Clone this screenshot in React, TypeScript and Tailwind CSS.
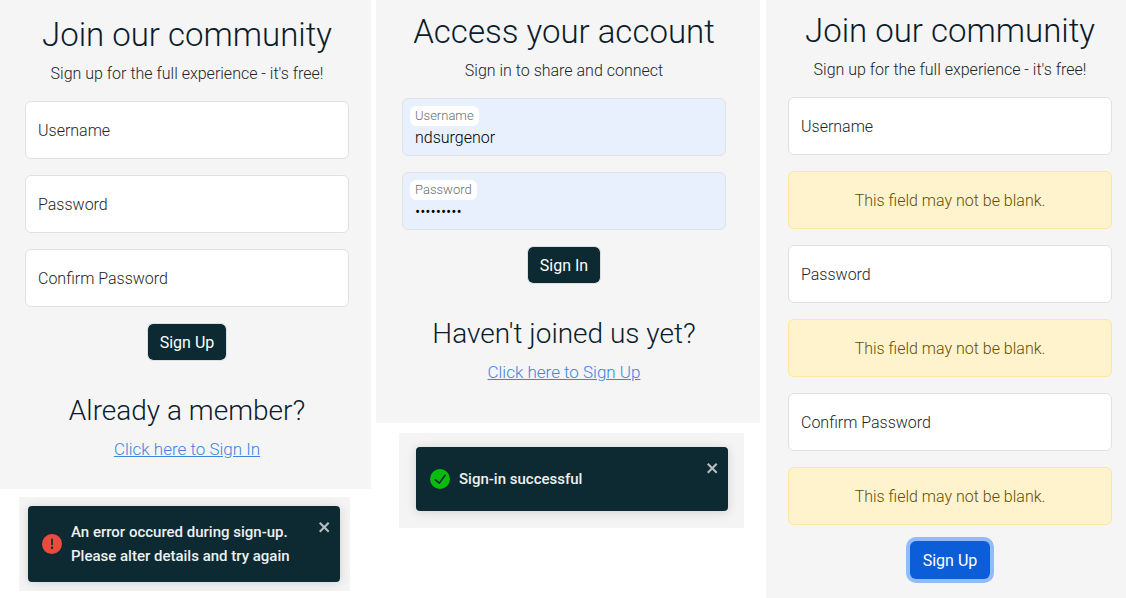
import { useId, type ReactNode } from "react";

function Field({ label, type = "text" }: { label: string; type?: string }) {
  const id = useId();
  return (
    <div className="relative">
      <input
        id={id}
        type={type}
        className="block h-[58px] w-full rounded-md border border-[#dee2e6] bg-white px-3 text-base font-light text-[#212529] outline-none"
      />
      <label
        htmlFor={id}
        className="pointer-events-none absolute inset-y-0 left-0 flex items-center px-[13px] pt-0.5 font-light text-[#212529]"
      >
        {label}
      </label>
    </div>
  );
}

function FilledField({ label, value, type = "text" }: { label: string; value: string; type?: string }) {
  const id = useId();
  return (
    <div className="relative">
      <input
        id={id}
        type={type}
        defaultValue={value}
        className="block h-[58px] w-full rounded-md border border-[#dee2e6] bg-[#e8f0fe] px-3 pt-5 text-base font-light text-black outline-none"
      />
      <label
        htmlFor={id}
        className="absolute top-2 left-2 rounded-md bg-white px-[5px] text-[13px] leading-5 font-light text-[#6b6e71]"
      >
        {label}
      </label>
    </div>
  );
}

function Warning() {
  return (
    <div
      role="alert"
      className="flex h-[58px] items-center justify-center rounded-md border border-[#ffe69c] bg-[#fff3cd] pt-0.5 font-light text-[#664d03]"
    >
      This field may not be blank.
    </div>
  );
}

function Heading({ title, subtitle }: { title: string; subtitle: string }) {
  return (
    <header className="text-center">
      <h1 className="mb-[7px] text-[33px] leading-10 font-light whitespace-nowrap text-[#0b1c2c]">{title}</h1>
      <p className="text-base leading-[23px] font-light text-[#212529]">{subtitle}</p>
    </header>
  );
}

function SubmitButton({ children, focused = false }: { children: ReactNode; focused?: boolean }) {
  return (
    <button
      type="button"
      className={
        focused
          ? "h-[38px] self-center rounded-md bg-[#0b5ed7] px-[13px] pt-0.5 text-base text-white ring-4 ring-[#93bbf8]"
          : "h-[38px] self-center rounded-md border border-[#dcdfe1] bg-[#0d2a33] bg-clip-padding px-3 pt-0.5 text-base text-white"
      }
    >
      {children}
    </button>
  );
}

function Switch({ question, link }: { question: string; link: string }) {
  return (
    <section className="mt-4 text-center">
      <h2 className="mb-2 text-[28px] leading-9 font-light text-[#0b1c2c]">{question}</h2>
      <a href="#" className="block text-[17px] leading-6 font-light text-[#3d85e0] underline">
        {link}
      </a>
    </section>
  );
}

function Toast({ kind, children }: { kind: "success" | "error"; children: ReactNode }) {
  return (
    <div
      role="status"
      className="flex min-h-16 rounded bg-[#0d2a33] py-[13px] pr-2 pl-[14px] shadow-[0_1px_10px_0_rgba(0,0,0,0.1),0_2px_15px_0_rgba(0,0,0,0.05)]"
    >
      <div className="flex flex-1 items-center gap-[9px] py-px">
        {kind === "success" ? (
          <svg viewBox="0 0 24 24" className="size-5 shrink-0" fill="#07bc0c">
            <path d="M12 0a12 12 0 1012 12A12.014 12.014 0 0012 0zm6.927 8.2l-6.845 9.289a1.011 1.011 0 01-1.43.188l-4.888-3.908a1 1 0 111.25-1.562l4.076 3.261 6.227-8.451a1 1 0 111.61 1.183z" />
          </svg>
        ) : (
          <svg viewBox="0 0 24 24" className="size-5 shrink-0" fill="#e74c3c">
            <path d="M11.983 0a12.206 12.206 0 00-8.51 3.653A11.8 11.8 0 000 12.207 11.779 11.779 0 0011.8 24h.214A12.111 12.111 0 0024 11.791 11.766 11.766 0 0011.983 0zM10.5 16.542a1.476 1.476 0 011.449-1.53h.027a1.527 1.527 0 011.523 1.47 1.475 1.475 0 01-1.449 1.53h-.027a1.529 1.529 0 01-1.523-1.47zM11 12.5v-6a1 1 0 012 0v6a1 1 0 11-2 0z" />
          </svg>
        )}
        <p className="text-[15px] leading-6 font-medium whitespace-nowrap text-[#edf0f0]">{children}</p>
      </div>
      <button type="button" aria-label="Close" className="self-start">
        <svg viewBox="0 0 14 16" className="h-4 w-[14px]" fill="#b6bfc2">
          <path
            fillRule="evenodd"
            d="M7.71 8.23l3.75 3.75-1.48 1.48-3.75-3.75-3.75 3.75L1 11.98l3.75-3.75L1 4.48 2.48 3l3.75 3.75L9.98 3l1.48 1.48-3.75 3.75z"
          />
        </svg>
      </button>
    </div>
  );
}

export default function App() {
  return (
    <main className="grid min-h-screen grid-cols-[371fr_385fr_360fr] gap-x-[5px] bg-white font-[Roboto,'Liberation_Sans',sans-serif] text-base">
      <div>
        <form className="flex flex-col gap-4 bg-[#f5f5f5] pt-[15px] pr-[22px] pb-7 pl-[25px]">
          <Heading title="Join our community" subtitle="Sign up for the full experience - it's free!" />
          <Field label="Username" />
          <Field label="Password" type="password" />
          <Field label="Confirm Password" type="password" />
          <SubmitButton>Sign Up</SubmitButton>
          <Switch question="Already a member?" link="Click here to Sign In" />
        </form>
        <div className="mt-2 mr-[21px] ml-[19px] overflow-hidden bg-[#f4f4f4] py-[9px] pr-[10px] pl-[9px]">
          <Toast kind="error">
            An error occured during sign-up.
            <br />
            Please alter details and try again
          </Toast>
        </div>
      </div>

      <div className="pr-px">
        <form className="flex flex-col gap-4 bg-[#f5f5f5] pt-3 pr-[34px] pb-[39px] pl-[26px]">
          <Heading title="Access your account" subtitle="Sign in to share and connect" />
          <FilledField label="Username" value="ndsurgenor" />
          <FilledField label="Password" value="surgenor1" type="password" />
          <SubmitButton>Sign In</SubmitButton>
          <Switch question="Haven't joined us yet?" link="Click here to Sign Up" />
        </form>
        <div className="mt-[10px] mr-4 ml-[23px] overflow-hidden bg-[#f4f4f4] pt-[14px] pr-4 pb-[17px] pl-[17px]">
          <Toast kind="success">Sign-in successful</Toast>
        </div>
      </div>

      <form className="flex flex-col gap-4 bg-[#f5f5f5] pt-[11px] pr-[14px] pb-4 pl-[22px]">
        <Heading title="Join our community" subtitle="Sign up for the full experience - it's free!" />
        <Field label="Username" />
        <Warning />
        <Field label="Password" type="password" />
        <Warning />
        <Field label="Confirm Password" type="password" />
        <Warning />
        <SubmitButton focused>Sign Up</SubmitButton>
      </form>
    </main>
  );
}
